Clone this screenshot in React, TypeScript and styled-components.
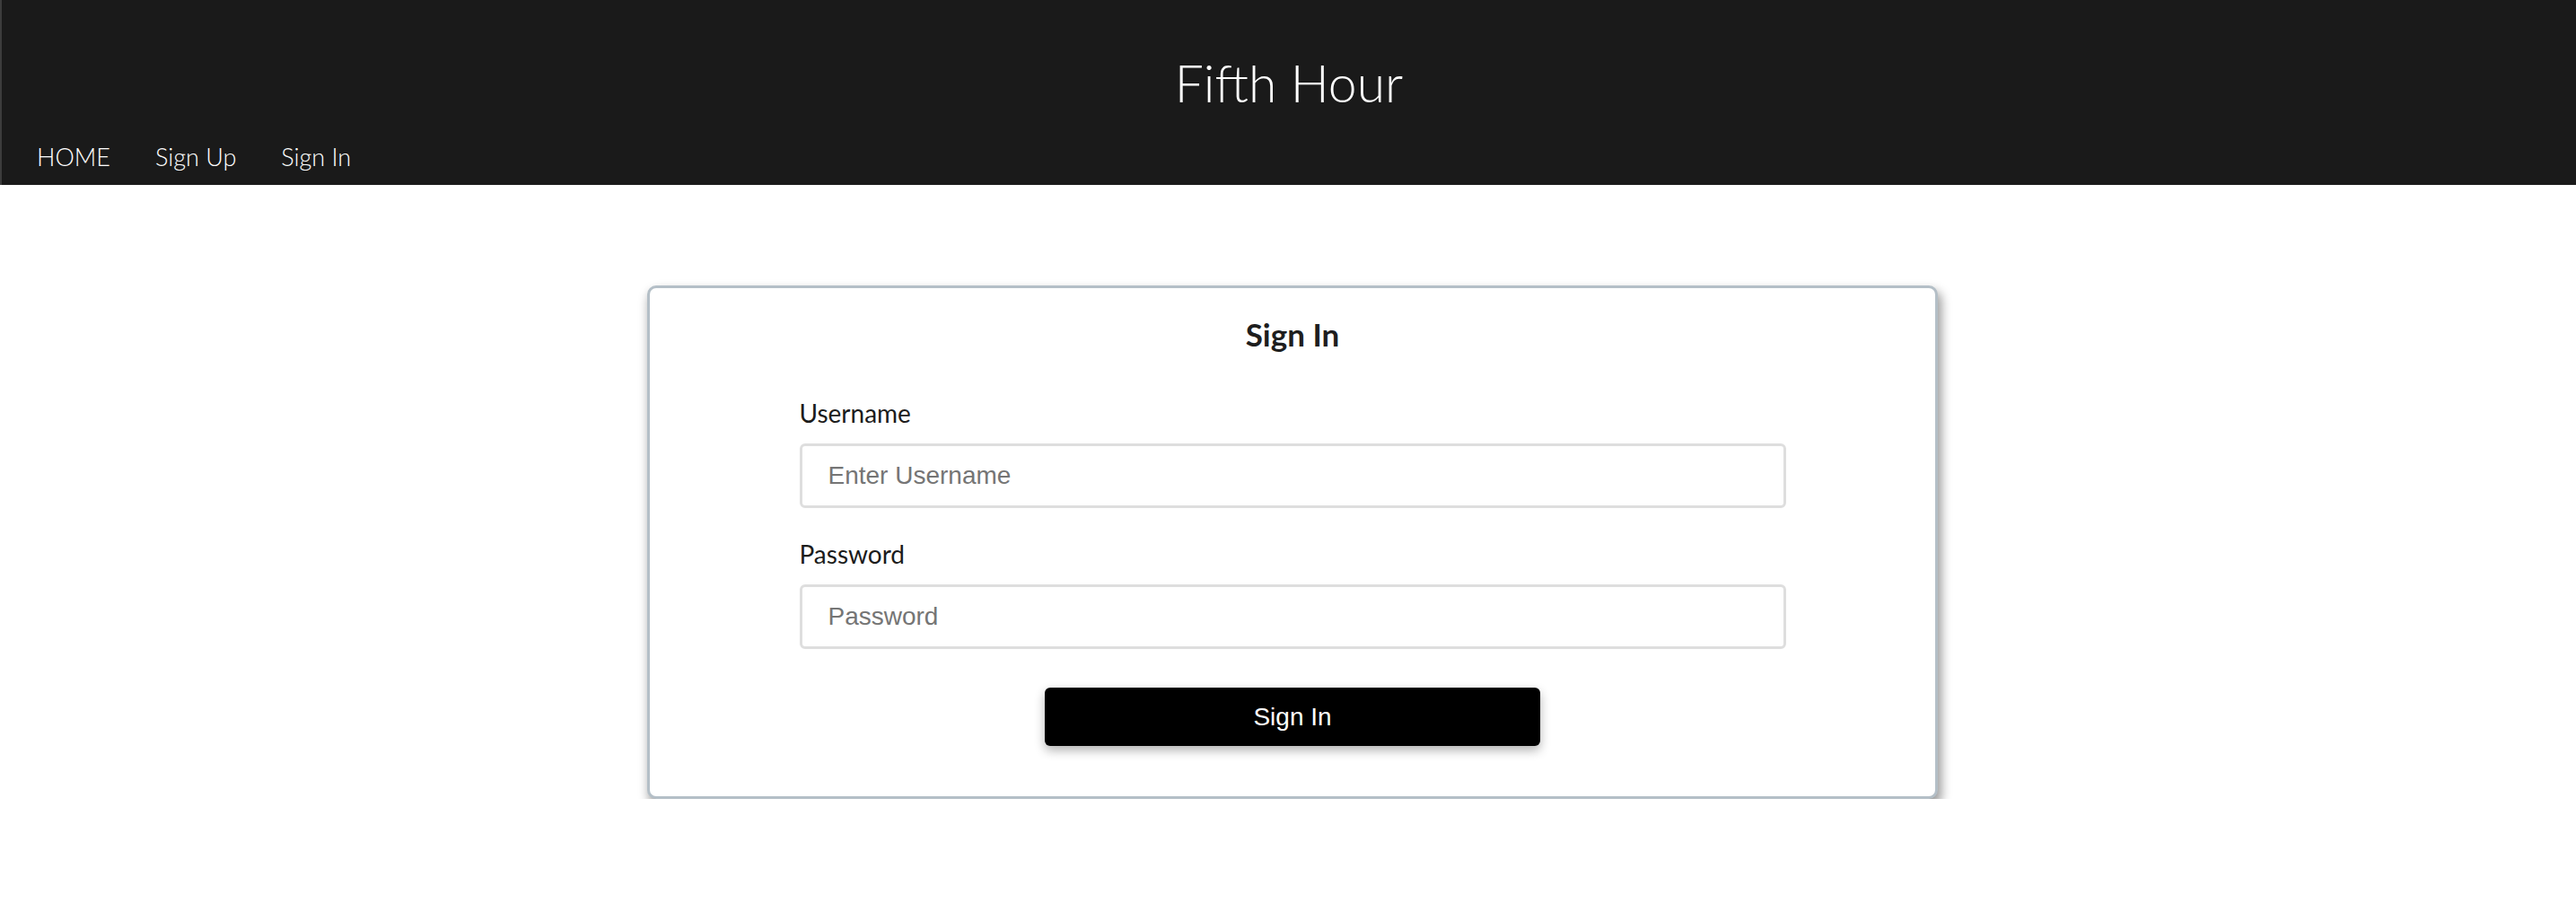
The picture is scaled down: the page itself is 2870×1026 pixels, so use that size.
import React, { useState } from "react";
import styled, { createGlobalStyle } from "styled-components";

const GlobalStyle = createGlobalStyle`
    html, body {
        margin: 0;
        padding: 0;
        background: #fff;
        font-family: "Lato", "Liberation Sans", sans-serif;
    }
    * {
        box-sizing: border-box;
    }
`;

const navItems = ["HOME", "Sign Up", "Sign In"];

const Field = ({
    label,
    type,
    placeholder,
    value,
    onChange,
}: {
    label: string;
    type: string;
    placeholder: string;
    value: string;
    onChange: (v: string) => void;
}) => (
    <FieldBlock>
        <Label htmlFor={label}>{label}</Label>
        <Input
            id={label}
            type={type}
            placeholder={placeholder}
            value={value}
            onChange={e => onChange(e.target.value)}
        />
    </FieldBlock>
);

const App = () => {
    const [username, setUsername] = useState("");
    const [password, setPassword] = useState("");

    return (
        <>
            <GlobalStyle />
            <Header>
                <Title>Fifth Hour</Title>
                <Nav>
                    {navItems.map(item => (
                        <NavLink key={item} href="#">
                            {item}
                        </NavLink>
                    ))}
                </Nav>
            </Header>
            <Main>
                <Card>
                    <CardTitle>Sign In</CardTitle>
                    <Form onSubmit={e => e.preventDefault()}>
                        <Field
                            label="Username"
                            type="text"
                            placeholder="Enter Username"
                            value={username}
                            onChange={setUsername}
                        />
                        <Field
                            label="Password"
                            type="password"
                            placeholder="Password"
                            value={password}
                            onChange={setPassword}
                        />
                        <SubmitButton type="submit">Sign In</SubmitButton>
                    </Form>
                </Card>
            </Main>
        </>
    );
};

export default App;

const Header = styled.header`
    display: flex;
    flex-direction: column;
    height: 206px;
    padding-top: 58px;
    background: #1a1a1a;
    border-left: 2px solid #3c3c3c;
`;

const Title = styled.h1`
    margin: 0;
    text-align: center;
    color: #fff;
    font-family: "Lato", sans-serif;
    font-weight: 300;
    font-size: 57px;
    line-height: 68px;
`;

const Nav = styled.nav`
    display: flex;
    gap: 50px;
    margin-top: 32px;
    padding-left: 39px;
`;

const NavLink = styled.a`
    color: #fff;
    text-decoration: none;
    font-family: "Lato", sans-serif;
    font-weight: 300;
    font-size: 27px;
    line-height: 33px;
`;

const Main = styled.main`
    display: flex;
    justify-content: center;
    padding: 112px 0 0 10px;
`;

const Card = styled.section`
    width: 1438px;
    padding: 30px 0 56px;
    background: #fff;
    border: 3px solid #b4bfc7;
    border-radius: 10px;
    box-shadow: 3px 7px 12px 1px rgba(0, 0, 0, 0.4);
`;

const CardTitle = styled.h2`
    margin: 0;
    text-align: center;
    color: #1e1e1e;
    font-family: "Lato", sans-serif;
    font-weight: 700;
    font-size: 35px;
    line-height: 42px;
`;

const Form = styled.form`
    display: flex;
    flex-direction: column;
    align-items: center;
    width: 1099px;
    margin: 50px auto 0;
`;

const FieldBlock = styled.div`
    display: flex;
    flex-direction: column;
    width: 100%;
    & + & {
        margin-top: 34px;
    }
`;

const Label = styled.label`
    color: #1c1c1c;
    font-family: "Lato", sans-serif;
    font-size: 28px;
    line-height: 34px;
    margin-bottom: 17px;
`;

const Input = styled.input`
    width: 100%;
    height: 72px;
    padding: 0 29px;
    border: 3px solid #dedede;
    border-radius: 6px;
    font-family: "Liberation Sans", Arial, sans-serif;
    font-size: 28px;
    color: #222;
    outline: none;
    &::placeholder {
        color: #757575;
    }
`;

const SubmitButton = styled.button`
    width: 552px;
    height: 65px;
    margin-top: 43px;
    border: none;
    border-radius: 6px;
    background: #000;
    color: #fff;
    font-family: "Liberation Sans", Arial, sans-serif;
    font-size: 28px;
    box-shadow: 0 5px 12px rgba(0, 0, 0, 0.3);
    cursor: pointer;
`;
